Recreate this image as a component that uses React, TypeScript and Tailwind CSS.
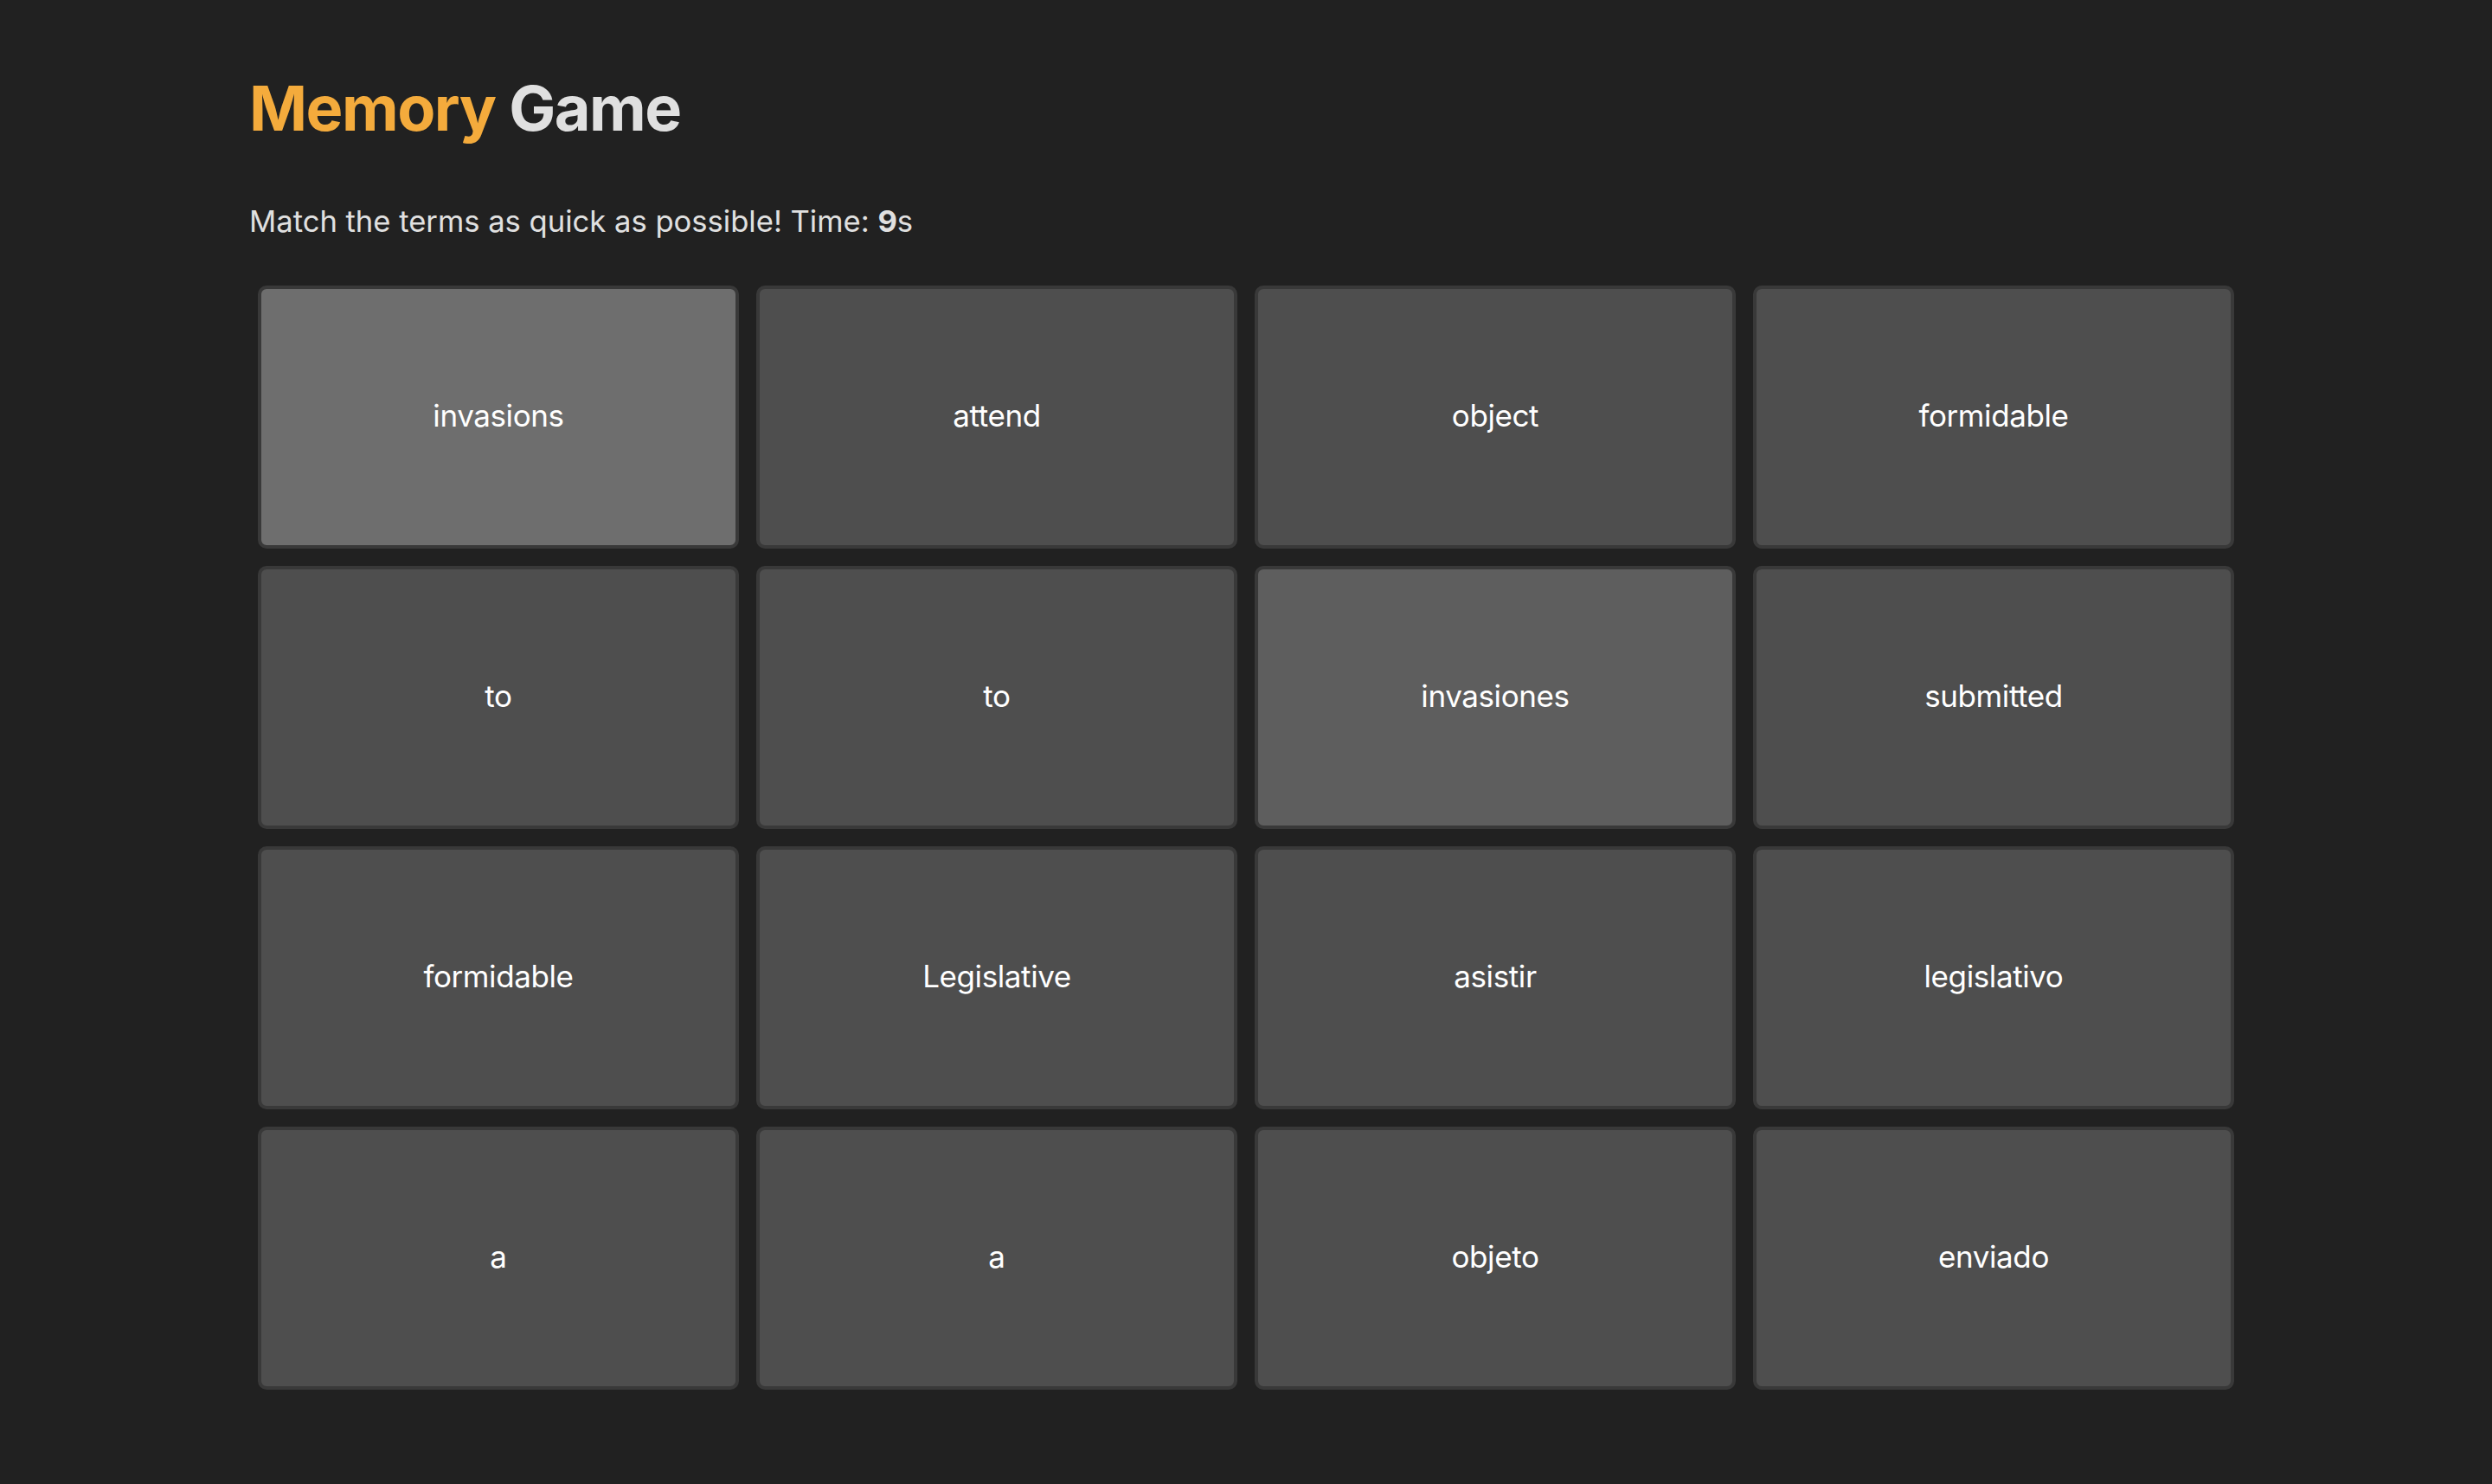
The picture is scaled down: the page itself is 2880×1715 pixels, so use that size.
import React from "react";

const cards: { text: string; bg: string }[] = [
  { text: "invasions", bg: "bg-[#6e6e6e]" },
  { text: "attend", bg: "bg-[#4e4e4e]" },
  { text: "object", bg: "bg-[#4e4e4e]" },
  { text: "formidable", bg: "bg-[#4e4e4e]" },
  { text: "to", bg: "bg-[#4e4e4e]" },
  { text: "to", bg: "bg-[#4e4e4e]" },
  { text: "invasiones", bg: "bg-[#5e5e5e]" },
  { text: "submitted", bg: "bg-[#4e4e4e]" },
  { text: "formidable", bg: "bg-[#4e4e4e]" },
  { text: "Legislative", bg: "bg-[#4e4e4e]" },
  { text: "asistir", bg: "bg-[#4e4e4e]" },
  { text: "legislativo", bg: "bg-[#4e4e4e]" },
  { text: "a", bg: "bg-[#4e4e4e]" },
  { text: "a", bg: "bg-[#4e4e4e]" },
  { text: "objeto", bg: "bg-[#4e4e4e]" },
  { text: "enviado", bg: "bg-[#4e4e4e]" },
];

export default function App() {
  return (
    <div
      className="min-h-[1715px] w-full bg-[#212121] text-[#e0e0e0]"
      style={{ fontFamily: "Inter, 'Noto Sans', sans-serif" }}
    >
      <div className="mx-auto w-[80%] pt-[89px]">
        <h1 className="text-[72px] font-bold leading-none tracking-[-1.5px]">
          <span className="text-[#f4ab3c]">Memory</span> <span className="text-[#e0e0e0]">Game</span>
        </h1>
        <p className="mt-[77px] text-[34.6px] leading-none text-[#e0e0e0]">
          Match the terms as quick as possible! Time: <b className="font-bold">9</b>s
        </p>
        <div className="mt-[47px] grid grid-cols-4">
          {cards.map((c, i) => (
            <div
              key={i}
              className={`m-[10px] flex h-[304px] items-center justify-center rounded-[10px] border-4 border-[#393939] pb-[3px] ${c.bg}`}
            >
              <span className="text-[35px] leading-none tracking-[-0.4px] text-white">{c.text}</span>
            </div>
          ))}
        </div>
      </div>
    </div>
  );
}
